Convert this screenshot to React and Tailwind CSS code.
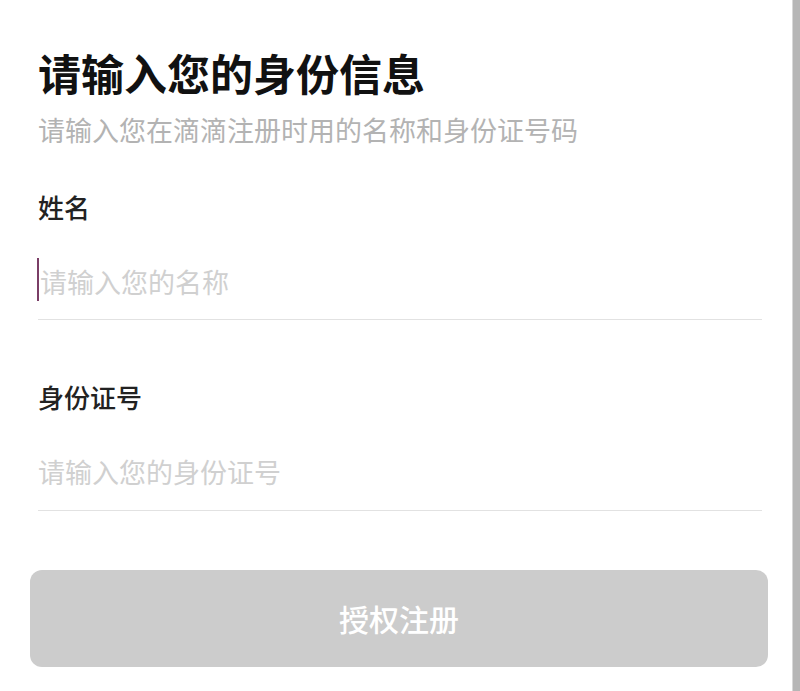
import React from 'react';

const cjk = "font-['Noto_Sans_CJK_SC',sans-serif]";

// One form field: label, fake input with placeholder, bottom rule
const Field = ({ label, placeholder, focused, labelGap, fieldGap, ruleGap }) => (
  <div>
    <div className={`text-[26px] leading-[26px] font-medium text-[#222] ${labelGap}`}>{label}</div>
    <div className={`flex items-center h-[44px] ${fieldGap}`}>
      {focused && <span className="w-[2px] h-[43px] bg-[#7a3d66] -ml-[1px] mr-[1px]" />}
      <span className="text-[27px] leading-[27px] pt-[5px] text-[#d0d0d0]">{placeholder}</span>
    </div>
    <div className={`border-b border-[#e2e2e2] ${ruleGap}`} />
  </div>
);

export default function App() {
  return (
    <div className={`flex h-[691px] w-[800px] bg-white ${cjk}`}>
      <main className="flex-1 flex flex-col pl-[38px] pr-[30px]">
        <h1 className="mt-[51px] text-[43px] leading-[42px] font-bold text-[#111]">请输入您的身份信息</h1>
        <p className="mt-[23px] text-[27px] leading-[27px] text-[#b3b3b3]">请输入您在滴滴注册时用的名称和身份证号码</p>

        <Field
          label="姓名"
          placeholder="请输入您的名称"
          focused
          labelGap="mt-[51px]"
          fieldGap="mt-[37px]"
          ruleGap="mt-[18px]"
        />
        <Field
          label="身份证号"
          placeholder="请输入您的身份证号"
          labelGap="mt-[64px]"
          fieldGap="mt-[37px]"
          ruleGap="mt-[19px]"
        />

        <button
          type="button"
          className="mt-[59px] -ml-[8px] -mr-[6px] h-[97px] rounded-[12px] bg-[#cccccc] text-white text-[30px] font-medium"
        >
          授权注册
        </button>
      </main>
      {/* scrollbar strip */}
      <div className="w-[8px] bg-[#b6b6b6] border-l border-[#d8d8d8]" />
    </div>
  );
}
